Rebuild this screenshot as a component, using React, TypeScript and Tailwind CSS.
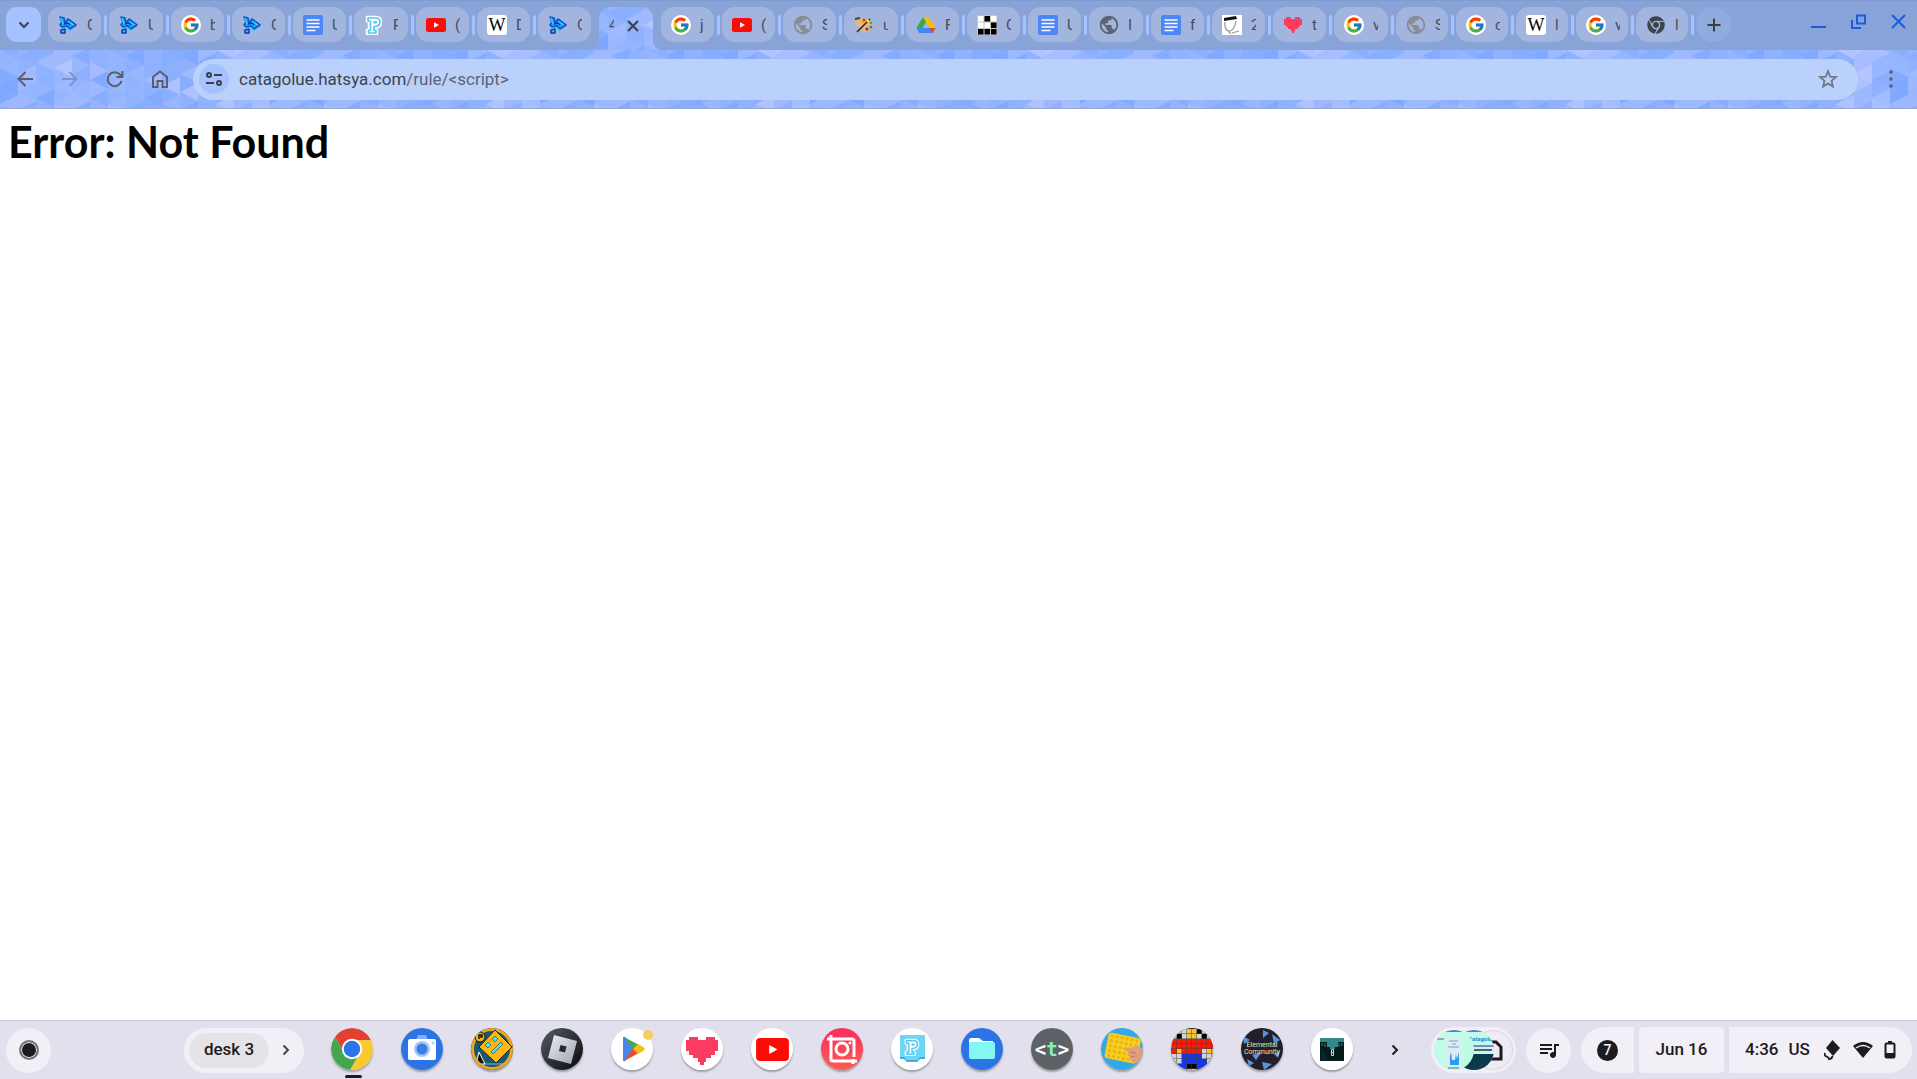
import type { ReactNode } from 'react'
import clsx from 'clsx'
import { FcGoogle } from 'react-icons/fc'
import { FaChrome } from 'react-icons/fa'
import { MdPublic, MdQueueMusic } from 'react-icons/md'

const SHADES = ['#7ea8ff', '#86adff', '#8db0ff', '#95b5ff', '#9cb9ff', '#a5bcff', '#b6c5ff']

function shade(n: number) {
  const v = Math.sin(n * 12.9898) * 43758.5453
  return SHADES[Math.floor((v - Math.floor(v)) * SHADES.length)]
}

function Texture({ id, className, shape }: { id: string; className: string; shape?: string }) {
  const triangles: ReactNode[] = []
  for (let c = 0; c < 15; c++) {
    const x = c * 18
    triangles.push(<rect key={c} x={x} width="18" height="60" fill={shade(c * 3 + 2)} />)
    for (let r = -1; r < 4; r++) {
      const y = r * 18 + (c % 3) * 6
      triangles.push(
        <path key={`l${c}-${r}`} d={`M${x} ${y}l18 9l-18 9z`} fill={shade(c * 7 + r * 3 + 1)} opacity="0.45" />,
        <path key={`r${c}-${r}`} d={`M${x + 18} ${y + 9}v18l-18 -9z`} fill={shade(c * 5 + r * 11 + 40)} opacity="0.8" />,
      )
    }
  }
  return (
    <svg className={className} aria-hidden="true">
      <defs>
        <pattern id={id} width="270" height="60" patternUnits="userSpaceOnUse">
          {triangles}
        </pattern>
      </defs>
      {shape ? <path d={shape} fill={`url(#${id})`} /> : <rect width="100%" height="100%" fill={`url(#${id})`} />}
    </svg>
  )
}

/* favicons */

const Glider = () => (
  <svg viewBox="0 0 20 20" className="size-5">
    <g fill="none" strokeLinejoin="round">
      <path d="M2 2l4 1l1 5l3-4l8 6l-6 4l-3-3l-5 1l-2-2l2-3z" fill="#19a5ef" stroke="#0f52cf" strokeWidth="1.600" />
      <path d="M3 15l4-1l0 4l-4 0z" fill="#22c6f2" stroke="#0f3ca8" strokeWidth="1.500" />
      <path d="M3 3l2 6M10 6l6 4M8 13l4 3" stroke="#25dcf8" strokeWidth="1.400" />
      <path d="M6 9l4-1l2 2" stroke="#0a37b0" strokeWidth="1.400" />
    </g>
  </svg>
)

const Google = () => (
  <span className="flex size-5 items-center justify-center rounded-full bg-white">
    <FcGoogle className="size-[18px]" />
  </span>
)

const Docs = () => (
  <svg viewBox="0 0 20 20" className="size-5">
    <rect width="20" height="20" rx="2" fill="#4c87f5" />
    <path d="M3.500 5h13M3.500 8.500h13M3.500 12h13M3.500 15.500h9" stroke="#fff" strokeWidth="1.700" />
  </svg>
)

const PLetter = ({ className = 'size-5', outline = '#fff' }: { className?: string; outline?: string }) => (
  <svg viewBox="0 0 20 20" className={className}>
    <path d="M3 2h9q5 0 5 5t-5 5.500h-1v2.500h2v4h-10v-4h2v-8.500h-2z" fill={outline} stroke={outline} strokeWidth="2.500" strokeLinejoin="round" />
    <path d="M4 3h8q4 0 4 4t-4.500 4.500h-1.500v4h2v2.500h-7.500v-2.500h2v-9.500h-2.500z" fill="#fff" stroke="#55c6ee" strokeWidth="1.600" />
    <path d="M9.500 6h2q1.500 0 1.500 1.300t-1.500 1.300h-2z" fill="#55c6ee" />
  </svg>
)

const YouTube = ({ className = 'h-[14px] w-5' }: { className?: string }) => (
  <svg viewBox="0 0 20 14" className={className}>
    <rect width="20" height="14" rx="2.500" fill="#fb0d05" />
    <path d="M8 4.300l5 2.700l-5 2.700z" fill="#fff" />
  </svg>
)

const Wiki = () => (
  <span className="flex size-5 items-center justify-center rounded-[3px] bg-white font-['Liberation_Serif',serif] text-[18px] leading-5 text-black">
    W
  </span>
)

const Palette = () => (
  <svg viewBox="0 0 20 20" className="size-5">
    <path d="M1 6q7-6 15 0q6 6 1 9q-5 3-10 1q3-3-1-4q-6-1-5-6z" fill="#e9b673" />
    <path d="M3 17l13-13" stroke="#222" strokeWidth="1.500" />
    <path d="M1 4l5-1" stroke="#444" strokeWidth="2" />
    <circle cx="10" cy="5" r="1.500" fill="#e2371e" />
    <circle cx="14" cy="6" r="1.400" fill="#f6dc22" />
    <circle cx="17" cy="8" r="1.300" fill="#3fa648" />
    <circle cx="17" cy="12" r="1.500" fill="#2878db" />
    <circle cx="13" cy="14" r="1.500" fill="#83249b" />
  </svg>
)

const Drive = () => (
  <svg viewBox="0 0 20 20" className="size-5">
    <path d="M7 2h6l-9.500 16l-3-5z" fill="#34a853" />
    <path d="M7 2h6l6.500 11h-6z" fill="#fbbc04" />
    <path d="M.5 13h19l-3 5h-13z" fill="#4285f4" />
    <path d="M13.500 13h6l-3 5z" fill="#ea4335" />
    <path d="M10 8l3 5h-6z" fill="#a1b5df" />
  </svg>
)

const LifeGrid = () => (
  <svg viewBox="0 0 20 20" className="size-5">
    <rect width="20" height="20" fill="#c4c4c4" />
    {['101', '110', '000'].map((row, y) =>
      row.split('').map((cell, x) => (
        <rect key={`${x}${y}`} x={x * 6.5 + 1} y={y * 6.5 + 1} width="5.500" height="5.500" fill={cell === '1' ? '#fff' : '#000'} />
      )),
    )}
  </svg>
)

const Globe = () => <MdPublic className="size-[22px] shrink-0 text-[#878c95]" />
const DarkGlobe = () => <MdPublic className="size-[22px] shrink-0 text-[#5c6472]" />

const Sketch = () => (
  <svg viewBox="0 0 20 20" className="size-5">
    <rect width="20" height="20" fill="#fff" />
    <path d="M2 3l12-2l1 3l-13 2z" fill="#111" />
    <path d="M3 7q-1 6 3 9q6 1 8-10M6 16l3 3M10 18l7-2" fill="none" stroke="#999" strokeWidth="1.200" />
  </svg>
)

const Heart = ({ className = 'size-5' }: { className?: string }) => (
  <svg viewBox="0 0 20 20" className={className} shapeRendering="crispEdges">
    <path
      d="M3 2h5v2h4v-2h5v2h2v6h-2v2h-2v2h-3v2h-1v2h-2v-2h-1v-2h-3v-2h-2v-2h-2v-6h2z"
      fill="#fb3b5f"
    />
  </svg>
)

const ChromeGrey = () => <FaChrome className="mx-px size-[18px] shrink-0 text-[#3e444e]" />

interface Tab {
  icon: () => ReactNode
  title: string
}

const TABS_LEFT: Tab[] = [
  { icon: Glider, title: 'C' },
  { icon: Glider, title: 'U' },
  { icon: Google, title: 'b' },
  { icon: Glider, title: 'C' },
  { icon: Docs, title: 'U' },
  { icon: PLetter, title: 'P' },
  { icon: YouTube, title: '(' },
  { icon: Wiki, title: 'D' },
  { icon: Glider, title: 'C' },
]

const TABS_RIGHT: Tab[] = [
  { icon: Google, title: 'j' },
  { icon: YouTube, title: '(' },
  { icon: Globe, title: 'S' },
  { icon: Palette, title: 'u' },
  { icon: Drive, title: 'F' },
  { icon: LifeGrid, title: 'C' },
  { icon: Docs, title: 'U' },
  { icon: DarkGlobe, title: 'I' },
  { icon: Docs, title: 'f' },
  { icon: Sketch, title: '2' },
  { icon: Heart, title: 't' },
  { icon: Google, title: 'v' },
  { icon: Globe, title: 'S' },
  { icon: Google, title: 'c' },
  { icon: Wiki, title: 'l' },
  { icon: Google, title: 'v' },
  { icon: ChromeGrey, title: 'l' },
]

function BrowserTab({ tab, width, last }: { tab: Tab; width: string; last?: boolean }) {
  const Icon = tab.icon
  return (
    <>
      <button className={clsx('flex h-[35px] shrink-0 items-center gap-[9px] rounded-[13px] bg-[#a2b5de] pl-[10px]', width)}>
        <span className="flex w-5 shrink-0 items-center justify-center">
          <Icon />
        </span>
        <span className="w-[5px] overflow-hidden text-left text-[15px] leading-5 text-[#454c5a]">{tab.title}</span>
      </button>
      {last ? null : <span className="mt-2 mr-[2px] ml-[3px] h-5 w-[3px] shrink-0 rounded-sm bg-[#a3c2ff]" />}
    </>
  )
}

function TabStrip() {
  return (
    <div className="relative flex h-[50px] items-start bg-[#88a3d7] pt-[7px] pl-[6px] shadow-[inset_0_1px_0_#7f9bd0]">
      <button aria-label="Search tabs" className="mr-[7px] flex h-[35px] w-[35px] shrink-0 items-center justify-center rounded-[11px] bg-[#a3c2ff]">
        <svg viewBox="0 0 12 8" className="h-2 w-3" fill="none" stroke="#3c4043" strokeWidth="2">
          <path d="M1.500 1.500l4.500 4.500l4.500-4.500" />
        </svg>
      </button>
      {TABS_LEFT.map((tab, i) => (
        <BrowserTab key={i} tab={tab} width={i % 4 === 1 ? 'w-[54px]' : 'w-[53px]'} last={i === TABS_LEFT.length - 1} />
      ))}
      <div className="relative mx-[7px] h-[43px] w-14 shrink-0">
        <Texture
          id="tab-texture"
          className="absolute -left-2 h-[43px] w-[72px]"
          shape="M0 43A9 9 0 0 0 9 34V11A11 11 0 0 1 20 0H52A11 11 0 0 1 63 11V34A9 9 0 0 0 72 43Z"
        />
        <div className="relative flex h-[37px] items-center pl-[11px]">
          <span className="w-[5px] overflow-hidden text-[15px] text-[#454c5a]">4</span>
          <button aria-label="Close tab" className="ml-[13px]">
            <svg viewBox="0 0 12 12" className="size-3" stroke="#3c4043" strokeWidth="2">
              <path d="M1 1l10 10M11 1l-10 10" />
            </svg>
          </button>
        </div>
      </div>
      {TABS_RIGHT.map((tab, i) => (
        <BrowserTab key={i} tab={tab} width={i > 11 ? 'w-[52px]' : i % 4 === 3 ? 'w-[54px]' : 'w-[53px]'} />
      ))}
      <button aria-label="New tab" className="flex size-[35px] shrink-0 items-center justify-center rounded-full bg-[#8facdf]">
        <svg viewBox="0 0 14 14" className="size-[14px]" stroke="#3c4043" strokeWidth="2">
          <path d="M7 .5v13M.5 7h13" />
        </svg>
      </button>
      <div className="mr-[11px] ml-auto flex h-[28px] items-center gap-[25px] text-[#1f5bd8]">
        <button aria-label="Minimize">
          <svg viewBox="0 0 15 15" className="size-[15px]" stroke="currentColor" strokeWidth="2">
            <path d="M0 13h15" />
          </svg>
        </button>
        <button aria-label="Restore">
          <svg viewBox="0 0 15 15" className="size-[15px]" fill="none" stroke="currentColor" strokeWidth="2">
            <path d="M6 1.500h8v8h-8zM1 6v8h9" />
          </svg>
        </button>
        <button aria-label="Close">
          <svg viewBox="0 0 15 15" className="size-[15px]" stroke="currentColor" strokeWidth="2">
            <path d="M1 1l13 13M14 1l-13 13" />
          </svg>
        </button>
      </div>
    </div>
  )
}

function Toolbar() {
  const nav = [
    { label: 'Back', d: 'M17 9H3M9.500 2L2.500 9l7 7', color: 'text-[#5b5f68]' },
    { label: 'Forward', d: 'M1 9h14M8.500 2l7 7l-7 7', color: 'text-[#7f93c6]' },
    { label: 'Reload', d: 'M15.500 11a7 7 0 1 1-1.500-6.500l2 2M16.500 1v6h-6', color: 'text-[#5b5f68]' },
    { label: 'Home', d: 'M2 7l7-5.500l7 5.500v10h-4.500v-6h-5v6h-4.500z', color: 'text-[#5b5f68]' },
  ]
  return (
    <div className="relative flex h-[59px] items-center border-b border-[#9aa9cf] pr-4 pl-4">
      <Texture id="bar-texture" className="absolute inset-0 size-full" />
      <div className="relative mr-6 flex gap-[27px]">
        {nav.map((item) => (
          <button key={item.label} aria-label={item.label} className={item.color}>
            <svg viewBox="0 0 18 18" className="size-[18px]" fill="none" stroke="currentColor" strokeWidth="2">
              <path d={item.d} />
            </svg>
          </button>
        ))}
      </div>
      <div className="relative flex h-[41px] min-w-0 flex-1 items-center rounded-full bg-[#bad1fb] pr-5 pl-[6px]">
        <button aria-label="Site information" className="mr-[10px] flex size-[30px] shrink-0 items-center justify-center rounded-full bg-[#a3c2ff]">
          <svg viewBox="0 0 16 14" className="h-[14px] w-4" fill="none" stroke="#3c4043" strokeWidth="2">
            <circle cx="3" cy="3" r="2" />
            <path d="M8 3h8M0 11h8" />
            <circle cx="13" cy="11" r="2" />
          </svg>
        </button>
        <div className="min-w-0 flex-1 text-[17px] leading-6 whitespace-nowrap text-[#5b6478]">
          <span className="text-[#3e434c]">catagolue.hatsya.com</span>/rule/&lt;script&gt;
        </div>
        <button aria-label="Bookmark this tab">
          <svg viewBox="0 0 20 20" className="size-5" fill="none" stroke="#737883" strokeWidth="1.800">
            <path d="M10 2.200l2.200 5.400l5.800.5l-4.400 3.800l1.300 5.700l-4.900-3l-4.900 3l1.300-5.700l-4.400-3.800l5.800-.5z" />
          </svg>
        </button>
      </div>
      <button aria-label="Menu" className="relative ml-[23px]">
        <svg viewBox="0 0 20 20" className="size-5" fill="#5b5f68">
          <circle cx="10" cy="3" r="1.800" />
          <circle cx="10" cy="10" r="1.800" />
          <circle cx="10" cy="17" r="1.800" />
        </svg>
      </button>
    </div>
  )
}

/* shelf apps, all drawn on a 42px disc */

const PETAL = 'M12 7H22.900A12 12 0 0 0 2.220 5.060L7.670 14.500A5 5 0 0 1 12 7Z'

const Chrome = () => (
  <svg viewBox="0 0 24 24" className="size-full">
    <path d={PETAL} fill="#e34133" />
    <path d={PETAL} fill="#f9c92d" transform="rotate(120 12 12)" />
    <path d={PETAL} fill="#44a651" transform="rotate(240 12 12)" />
    <circle cx="12" cy="12" r="5.800" fill="#fff" />
    <circle cx="12" cy="12" r="4.700" fill="#2a75e8" />
  </svg>
)

const Camera = () => (
  <svg viewBox="0 0 42 42" className="size-full bg-[#2c74e6]">
    <path d="M15 12l2-5h8l2 5z" fill="#83b0f4" />
    <rect x="7" y="11" width="28" height="21" rx="2" fill="#fff" />
    <circle cx="21" cy="21" r="8" fill="#a5c6fa" />
    <circle cx="21" cy="21" r="5.500" fill="#3c7de4" />
    <circle cx="32" cy="15" r="1.500" fill="#7ff0e6" />
  </svg>
)

const GeometryDash = () => (
  <svg viewBox="0 0 42 42" className="size-full bg-[#1b5870]">
    <path d="M5 36h32" stroke="#4a9fc0" strokeWidth="1.500" />
    <path d="M5 36l3-12l6 12z" fill="#111" stroke="#fff" strokeWidth="1" />
    <circle cx="21" cy="21" r="19.500" fill="none" stroke="#f0a51a" strokeWidth="3" />
    <circle cx="9" cy="9" r="5" fill="#f7b417" stroke="#111" />
    <path d="M8 11v-4h3v2h-2" fill="none" stroke="#111" strokeWidth="1.500" />
    <path d="M24 2l17 17l-16 16l-17-16z" fill="#fdb813" stroke="#222" strokeWidth="1" />
    <path d="M17 14l3 3l-3 3l-3-3zM24 8l3 3l-3 3l-3-3zM20 24l10-10l2 2l-10 10z" fill="#4be2ee" stroke="#333" strokeWidth=".6" />
  </svg>
)

const Roblox = () => (
  <svg viewBox="0 0 42 42" className="size-full">
    <defs>
      <linearGradient id="rbx-bg" x2="1" y2="1">
        <stop stopColor="#555b66" />
        <stop offset="1" stopColor="#08090b" />
      </linearGradient>
      <linearGradient id="rbx-fg" x2="1" y2="1">
        <stop stopColor="#eceef1" />
        <stop offset="1" stopColor="#9fa4ac" />
      </linearGradient>
    </defs>
    <rect width="42" height="42" fill="url(#rbx-bg)" />
    <path d="M13 7l23 6l-6 23l-23-6z" fill="url(#rbx-fg)" />
    <path d="M19.500 17l6 1.500l-1.500 6l-6-1.500z" fill="#26292e" />
  </svg>
)

const PlayStore = () => (
  <svg viewBox="0 0 42 42" className="size-full bg-white">
    <path d="M12 10v22q0 2 2 1l12-12l-12-12q-2-1-2 1z" fill="#4587ee" />
    <path d="M13 9l15 8l-6 5z" fill="#46a558" />
    <path d="M13 33l15-8l-6-5z" fill="#e64a38" />
    <path d="M27 16l6 3.500q1.500 1.500 0 3l-6 3.500l-5-5z" fill="#f8bd16" />
  </svg>
)

const HeartApp = () => (
  <span className="flex size-full items-center justify-center bg-white">
    <Heart className="mt-1 size-9" />
  </span>
)

const YouTubeApp = () => (
  <span className="flex size-full items-center justify-center bg-white">
    <YouTube className="h-[23px] w-[33px]" />
  </span>
)

const Recorder = () => (
  <svg viewBox="0 0 42 42" className="size-full">
    <defs>
      <linearGradient id="rec" x2="0" y2="1">
        <stop stopColor="#fb2d60" />
        <stop offset="1" stopColor="#fb5d50" />
      </linearGradient>
    </defs>
    <rect width="42" height="42" fill="url(#rec)" />
    <g fill="none" stroke="#fff" strokeWidth="3">
      <path d="M6 11h25q2 0 2 2v16M10 7v24q0 2 2 2h24M32 31v5" />
      <circle cx="21" cy="21" r="6" />
    </g>
    <circle cx="29" cy="15" r="1.500" fill="#fff" />
  </svg>
)

const PApp = () => (
  <span className="relative flex size-full items-center justify-center bg-white">
    <svg viewBox="0 0 42 42" className="size-full">
      <path d="M9 8h25v23h-5l-3 3h-10l-3-3h-4z" fill="#4aa9d4" />
      <path d="M9 7h25v22h-5l-3 3h-10l-3-3h-4z" fill="#6cd6f6" />
    </svg>
    <PLetter className="absolute top-[10px] left-[12px] h-[18px] w-[18px]" outline="#e9fbff" />
  </span>
)

const Files = () => (
  <svg viewBox="0 0 42 42" className="size-full bg-[#2c74e6]">
    <path d="M8 12q0-2 2-2h8l4 3h10v6h-24z" fill="#fff" />
    <path d="M8 15q0-1 1-1h23q2 0 2 2v13q0 2-2 2h-22q-2 0-2-2z" fill="#85f7f2" />
  </svg>
)

const TextApp = () => (
  <span className="flex size-full items-center justify-center bg-[#5d6267] font-['DejaVu_Sans_Mono',monospace] text-[19px] font-bold text-white">
    &lt;<span className="text-[#86efb5]">t</span>&gt;
  </span>
)

const PopIt = () => (
  <svg viewBox="0 0 42 42" className="size-full bg-[#30a9e6]">
    <g transform="rotate(11 21 21)">
      <rect x="5" y="7" width="33" height="26" rx="3" fill="#f8cd20" />
      <g fill="#e9b312">
        {[0, 1, 2, 3, 4].map((y) => [0, 1, 2, 3, 4, 5].map((x) => <circle key={`${x}${y}`} cx={9 + x * 5} cy={10 + y * 5} r="1.500" />))}
      </g>
    </g>
    <path d="M24 20q7 0 12-2l6 2v13l-9 2q-5-3-4-6q-4-2-1-5q-5-1-4-4z" fill="#dca07c" />
    <path d="M29 24l6 1M29 29l5-1" stroke="#b87d5b" />
  </svg>
)

const PIXELS = ['wwwwkkkwww', 'wwwwyykwww', 'wwkwyywkww', 'wrrrrrrrrw', 'wrrrrrrrrr', 'rryrrrrwyy', 'wwwbbbbwww', 'wwwbbbbbww', 'wwbbkkbbww', 'wwkkwwkkww']
const PIXEL_COLORS: Record<string, string> = { w: '#d4d4d4', k: '#000', y: '#f4c430', r: '#f31c0b', b: '#1236ee' }

const PixelMan = () => (
  <svg viewBox="0 0 42 42" className="size-full bg-[#444]">
    {PIXELS.map((row, y) =>
      row.split('').map((p, x) => <rect key={`${x}-${y}`} x={x * 5 - 4} y={y * 5 - 4} width="4.500" height="4.500" fill={PIXEL_COLORS[p]} />),
    )}
  </svg>
)

const Elemental = () => (
  <span className="relative flex size-full items-center justify-center bg-[#211f29]">
    <svg viewBox="0 0 42 42" className="absolute inset-0 size-full" fill="#5a94d8">
      <path d="M22 2l6 3l-6 5zM31 6l8 6l-6 4zM2 8l7 4l-6 4zM11 27l10-3l-6 8zM21 34l10 2l-8 6zM6 31l7 4l-5 3zM33 26l6-3l-2 7z" />
    </svg>
    <span className="relative text-center text-[7px] leading-[7px] text-[#ece5a4]">Elemental Community</span>
  </span>
)

const Cave = () => (
  <svg viewBox="0 0 42 42" className="size-full bg-white">
    <rect x="9" y="10" width="24" height="23" fill="#061a1c" />
    <path d="M9 10h24v4h-6v5h-3v2h-5v-2h-3v-5h-7z" fill="#328a8a" />
    <path d="M10 33v-14l8 14z" fill="#03292a" />
    <path d="M11 18v-3M14 19v-4M28 19v-4M31 18v-3" stroke="#328a8a" />
    <path d="M20.500 21.500h2v6h-2zM20.500 24.500h2" fill="none" stroke="#bdd" strokeWidth="1" />
  </svg>
)

const APPS = [
  { name: 'Chrome', icon: Chrome, open: true },
  { name: 'Camera', icon: Camera },
  { name: 'Geometry Dash', icon: GeometryDash },
  { name: 'Roblox', icon: Roblox },
  { name: 'Play Store', icon: PlayStore, badge: true },
  { name: 'Heart', icon: HeartApp },
  { name: 'YouTube', icon: YouTubeApp },
  { name: 'Recorder', icon: Recorder },
  { name: 'P', icon: PApp },
  { name: 'Files', icon: Files },
  { name: 'Text', icon: TextApp },
  { name: 'Pop It', icon: PopIt },
  { name: 'Pixel', icon: PixelMan },
  { name: 'Elemental', icon: Elemental },
  { name: 'Cave', icon: Cave },
]

function Chevron() {
  return (
    <svg viewBox="0 0 8 12" className="h-3 w-2" fill="none" stroke="currentColor" strokeWidth="2">
      <path d="M1.500 1.500l4.500 4.500l-4.500 4.500" />
    </svg>
  )
}

function HoldingSpace() {
  return (
    <button aria-label="Recent files" className="flex h-[46px] items-center rounded-full bg-[#f2eff7] px-[3px]">
      <svg viewBox="0 0 79 40" className="h-10 w-[79px]">
        <defs>
          <clipPath id="hold-a">
            <circle cx="20" cy="20" r="20" />
          </clipPath>
          <clipPath id="hold-b">
            <circle cx="40" cy="20" r="20" />
          </clipPath>
        </defs>
        <circle cx="59" cy="20" r="19.500" fill="#eeebf4" stroke="#d9d6e1" />
        <path d="M53 12h9l5 5v12h-14z" fill="none" stroke="#1d1b20" strokeWidth="3" />
        <g clipPath="url(#hold-b)">
          <rect x="20" width="40" height="40" fill="#c9f5ef" />
          <path d="M20 1h40" stroke="#4d7fd8" strokeWidth="2" />
          <rect x="20" y="24" width="40" height="16" fill="#0c3a4a" />
          <path d="M38 16h22" stroke="#5a6ab0" strokeWidth="1.500" />
          <path d="M40 20h18" stroke="#234" strokeWidth="1.500" />
          <text x="34" y="11" fontSize="6" fontWeight="bold" fill="#1292c8">
            Catagolue
          </text>
        </g>
        <g clipPath="url(#hold-a)">
          <rect width="40" height="40" fill="#bffbe7" />
          <path d="M0 1h40" stroke="#4d7fd8" strokeWidth="2" />
          <rect x="12" y="7" width="15" height="28" fill="#d9edf2" />
          <path d="M15 11h9M18 14h4M14 17h11" stroke="#8b9ab8" />
          <path d="M16 35v-9l1-4l1 8l3 0l1-6l1 5l2-7v13z" fill="#2f9bef" />
          <path d="M3 9h7M14 38h11" stroke="#568" />
        </g>
      </svg>
    </button>
  )
}

function Shelf() {
  return (
    <footer className="flex h-[59px] items-center border-t border-[#cbc8da] bg-[#e2e0ec] pr-[5px] pl-[6px] text-[#1d1b20]">
      <button aria-label="Launcher" className="flex size-[45px] items-center justify-center rounded-full bg-[#f2eff7]">
        <span className="size-5 rounded-full border-2 border-[#77757d] bg-[#1d1b20] ring-[1px] ring-[#f2eff7] ring-inset" />
      </button>
      <div className="mr-[27px] ml-[133px] flex h-[45px] w-[120px] items-center rounded-full bg-[#f2eff7] pl-[5px]">
        <button className="h-[35px] w-20 rounded-full bg-[#e5e3e8] text-[17px] font-medium">desk 3</button>
        <button aria-label="Next desk" className="ml-[13px] text-[#44424a]">
          <Chevron />
        </button>
      </div>
      <nav className="flex gap-7 self-start pt-[7px]">
        {APPS.map(({ name, icon: Icon, open, badge }) => (
          <button key={name} aria-label={name} className="relative size-[42px]">
            <span className="block size-full overflow-hidden rounded-full shadow-[0_2px_2px_rgba(0,0,0,0.3)]">
              <Icon />
            </span>
            {badge ? <span className="absolute top-[2px] right-0 size-[10px] rounded-full bg-[#f6cf5b]" /> : null}
            {open ? <span className="absolute -bottom-2 left-[14px] h-[3px] w-[17px] rounded-sm bg-[#1d1b20]" /> : null}
          </button>
        ))}
      </nav>
      <button aria-label="More apps" className="ml-[38px]">
        <Chevron />
      </button>
      <div className="ml-auto flex items-center text-[17px] font-medium">
        <HoldingSpace />
        <button aria-label="Media controls" className="mx-[10px] flex size-[45px] items-center justify-center rounded-full bg-[#f2eff7]">
          <MdQueueMusic className="size-6" />
        </button>
        <div className="flex gap-[5px]">
          <button className="flex h-[46px] w-[53px] items-center justify-center rounded-l-full rounded-r-[4px] bg-[#f2eff7]">
            <span className="flex size-[21px] items-center justify-center rounded-full bg-[#1d1b20] text-[14px] text-[#f2eff7]">7</span>
          </button>
          <button className="h-[46px] w-[85px] rounded-[4px] bg-[#f2eff7]">Jun 16</button>
          <button className="flex h-[46px] w-[183px] items-center rounded-l-[4px] rounded-r-full bg-[#f2eff7] pl-4 whitespace-nowrap">
            <span className="mr-[10px]">4:36</span>
            <span className="mr-[14px]">US</span>
            <svg viewBox="0 0 16 20" className="h-5 w-4" fill="#1d1b20">
              <path d="M8.500 0l7.500 8l-7 8l-7-8z" />
              <path d="M1 13q-1 3 1.500 3.500q2 .5 2.500 2.500q3 0 3.500-3" fill="none" stroke="#1d1b20" strokeWidth="1.800" />
            </svg>
            <svg viewBox="0 0 20 16" className="ml-[13px] h-4 w-5">
              <path d="M0 4q10-8 20 0l-10 12z" fill="#1d1b20" />
              <path d="M3 6q7-5 14 0" fill="none" stroke="#f2eff7" strokeWidth="1.300" />
            </svg>
            <svg viewBox="0 0 12 18" className="ml-[11px] h-[18px] w-3">
              <path d="M4 0h4v2h-4z" fill="#1d1b20" />
              <rect x="1.500" y="2.500" width="9" height="14" rx="1" fill="none" stroke="#1d1b20" strokeWidth="2" />
              <path d="M2 12h8v4h-8z" fill="#1d1b20" />
            </svg>
          </button>
        </div>
      </div>
    </footer>
  )
}

export default function App() {
  return (
    <div className="flex min-h-screen flex-col overflow-hidden bg-white font-[Roboto,sans-serif]">
      <header>
        <TabStrip />
        <Toolbar />
      </header>
      <main className="flex-1 px-2 pt-2">
        <h1 className="font-[Lato,sans-serif] text-[43px] leading-[50px] font-bold text-black">Error: Not Found</h1>
      </main>
      <Shelf />
    </div>
  )
}
